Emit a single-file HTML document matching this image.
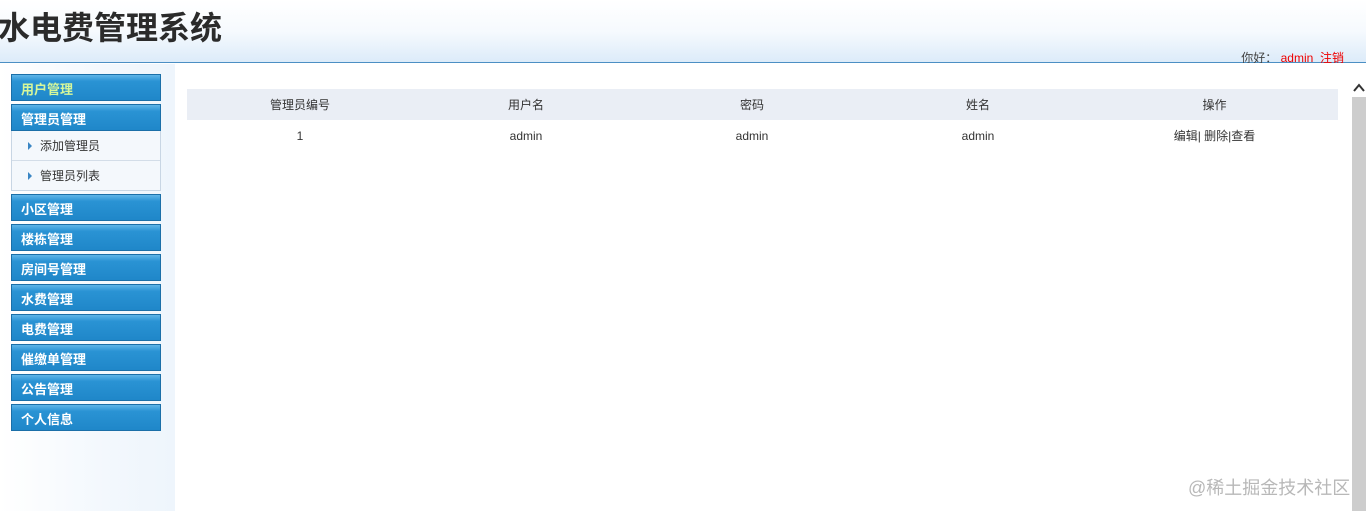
<!DOCTYPE html>
<html><head><meta charset="utf-8"><style>
*{margin:0;padding:0;box-sizing:border-box}
body{width:1366px;height:511px;overflow:hidden;background:#fff;font-family:"Liberation Sans","Noto Sans CJK SC",sans-serif;position:relative}
.hd{position:absolute;left:0;top:0;width:1366px;height:63px;background:linear-gradient(#fff 0%,#f6fafe 50%,#dcebf9 100%);border-bottom:1px solid #4b8fc4}
.hd h1{position:absolute;left:-2px;top:3px;font-size:32px;font-weight:bold;color:#2b2b2b}
.hi{position:absolute;right:22px;top:51px;font-size:12px;color:#444;height:12px;overflow:hidden;line-height:15px}
.hi span{color:#e00}
.side{position:absolute;left:0;top:64px;width:175px;height:447px;background:linear-gradient(90deg,#fff 0%,#f3f8fd 60%,#eef5fc 100%)}
.m{position:absolute;left:11px;width:150px;height:27px;background:linear-gradient(#5fb5e8 0%,#2a93d4 25%,#1f87c9 100%);border:1px solid #1b6fa8;color:#fff;font-weight:bold;font-size:13px;padding-left:9px;line-height:30px}
.sub{position:absolute;left:11px;top:131px;width:150px;height:60px;background:#f4f8fc;border:1px solid #c8d6e4;border-top:none}
.sub div{height:30px;line-height:30px;font-size:12px;color:#333;padding-left:28px;border-bottom:1px solid #d3dde8;position:relative}
.sub div:last-child{border-bottom:none}
.sub div:before{content:"";position:absolute;left:16px;top:11px;border-left:4px solid #3a86c4;border-top:4px solid transparent;border-bottom:4px solid transparent}
table{position:absolute;left:187px;top:89px;width:1151px;border-collapse:collapse;font-size:12px;color:#333;table-layout:fixed}
th{background:#eaeef5;font-weight:normal;height:31px;text-align:center}
td{height:31px;text-align:center}
.sb{position:absolute;left:1351px;top:64px;width:15px;height:447px;background:#fff}
.sb .th{position:absolute;left:1px;top:33px;width:14px;height:414px;background:#cdcdcd}
.wm{position:absolute;left:1188px;top:474px;font-size:18px;color:#b8b8b8}
</style></head><body>
<div class="hd"><h1>水电费管理系统</h1><div class="hi">你好： <span>admin</span> &nbsp;<span>注销</span></div></div>
<div class="side"></div>
<div class="m" style="top:74px;color:#d6f79a">用户管理</div>
<div class="m" style="top:104px">管理员管理</div>
<div class="sub"><div>添加管理员</div><div>管理员列表</div></div>
<div class="m" style="top:194px">小区管理</div>
<div class="m" style="top:224px">楼栋管理</div>
<div class="m" style="top:254px">房间号管理</div>
<div class="m" style="top:284px">水费管理</div>
<div class="m" style="top:314px">电费管理</div>
<div class="m" style="top:344px">催缴单管理</div>
<div class="m" style="top:374px">公告管理</div>
<div class="m" style="top:404px">个人信息</div>
<table><colgroup><col style="width:226px"><col style="width:226px"><col style="width:226px"><col style="width:226px"><col></colgroup>
<tr><th>管理员编号</th><th>用户名</th><th>密码</th><th>姓名</th><th>操作</th></tr>
<tr><td>1</td><td>admin</td><td>admin</td><td>admin</td><td>编辑| 删除|查看</td></tr></table>
<div class="sb"><svg style="position:absolute;left:2px;top:19px" width="12" height="9"><path d="M1 8 L6 2 L11 8" stroke="#333" stroke-width="2" fill="none"/></svg><div class="th"></div></div>
<div class="wm">@稀土掘金技术社区</div>
</body></html>
